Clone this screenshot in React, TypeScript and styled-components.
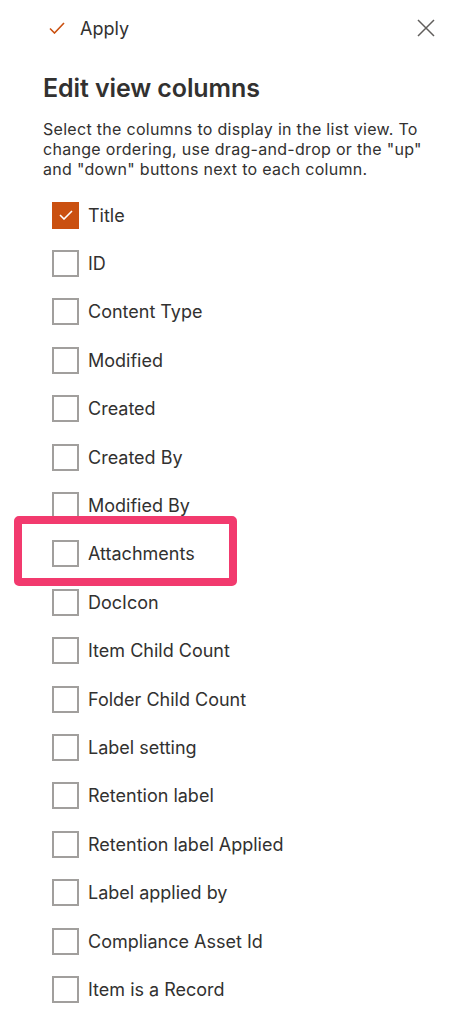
import styled, { createGlobalStyle } from "styled-components";

const GlobalStyle = createGlobalStyle`
  body {
    margin: 0;
    background: #ffffff;
    font-family: Inter, "Liberation Sans", sans-serif;
    color: #323130;
  }
`;

const Panel = styled.div`
  width: 457px;
  height: 1024px;
  overflow: hidden;
  position: relative;
  box-sizing: border-box;
  padding: 0 0 0 43px;
`;

const TopBar = styled.div`
  display: flex;
  align-items: center;
  justify-content: space-between;
  height: 56px;
  padding-right: 22px;
`;

const ApplyButton = styled.button`
  display: flex;
  align-items: center;
  gap: 15px;
  border: none;
  background: none;
  padding: 0 0 0 6px;
  font: inherit;
  font-size: 18px;
  color: #323130;
  cursor: pointer;
`;

const CloseButton = styled.button`
  border: none;
  background: none;
  padding: 0;
  display: flex;
  cursor: pointer;
`;

const Heading = styled.h2`
  margin: 16px 0 0;
  font-size: 25px;
  font-weight: 600;
  line-height: 32px;
  color: #323130;
  letter-spacing: -0.1px;
`;

const Description = styled.p`
  margin: 15px 0 0;
  font-size: 16px;
  line-height: 20px;
  letter-spacing: 0.3px;
  color: #323130;
  width: 382px;
`;

const ColumnList = styled.ul`
  list-style: none;
  margin: 12px 0 0;
  padding: 0 0 0 9px;
`;

const Row = styled.li`
  display: flex;
  align-items: center;
  gap: 9px;
  height: 48.4px;
`;

const Box = styled.span<{ $checked?: boolean }>`
  width: 27px;
  height: 27px;
  box-sizing: border-box;
  display: flex;
  align-items: center;
  justify-content: center;
  background: ${(p) => (p.$checked ? "#ca5010" : "#ffffff")};
  border: 2px solid ${(p) => (p.$checked ? "#ca5010" : "#a19f9d")};
`;

const Label = styled.span`
  font-size: 18px;
  color: #323130;
`;

const Highlight = styled.div`
  position: absolute;
  left: 14px;
  top: 516px;
  width: 223px;
  height: 70px;
  box-sizing: border-box;
  border: 8px solid #f23a6e;
  border-radius: 5px;
`;

const columns = [
  { name: "Title", checked: true },
  { name: "ID" },
  { name: "Content Type" },
  { name: "Modified" },
  { name: "Created" },
  { name: "Created By" },
  { name: "Modified By" },
  { name: "Attachments" },
  { name: "DocIcon" },
  { name: "Item Child Count" },
  { name: "Folder Child Count" },
  { name: "Label setting" },
  { name: "Retention label" },
  { name: "Retention label Applied" },
  { name: "Label applied by" },
  { name: "Compliance Asset Id" },
  { name: "Item is a Record" },
];

function App() {
  return (
    <Panel>
      <GlobalStyle />
      <TopBar>
        <ApplyButton>
          <svg width="16" height="12" viewBox="0 0 16 12">
            <path d="M1 6.5 L5.5 11 L15 1" fill="none" stroke="#ca5010" strokeWidth="1.6" />
          </svg>
          Apply
        </ApplyButton>
        <CloseButton>
          <svg width="18" height="18" viewBox="0 0 18 18">
            <path d="M1 1 L17 17 M17 1 L1 17" stroke="#605e5c" strokeWidth="1.5" />
          </svg>
        </CloseButton>
      </TopBar>
      <Heading>Edit view columns</Heading>
      <Description>
        Select the columns to display in the list view. To change ordering, use
        drag-and-drop or the "up" and "down" buttons next to each column.
      </Description>
      <ColumnList>
        {columns.map((c) => (
          <Row key={c.name}>
            <Box $checked={c.checked}>
              {c.checked && (
                <svg width="14" height="10" viewBox="0 0 14 10">
                  <path d="M1 5 L5 9 L13 1" fill="none" stroke="#ffffff" strokeWidth="1.6" />
                </svg>
              )}
            </Box>
            <Label>{c.name}</Label>
          </Row>
        ))}
      </ColumnList>
      <Highlight />
    </Panel>
  );
}

export default App;
